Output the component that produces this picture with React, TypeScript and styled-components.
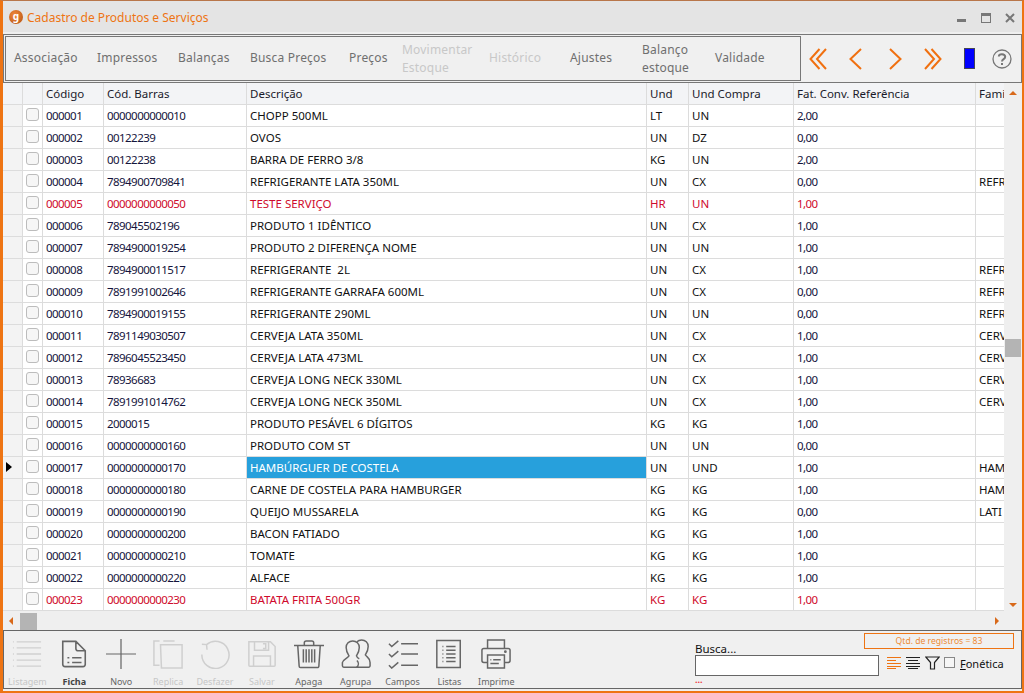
import React from "react";
import styled, { createGlobalStyle } from "styled-components";

const Global = createGlobalStyle`
  html, body { margin: 0; padding: 0; background: #fff; }
  #root { width: 1024px; height: 693px; overflow: hidden; }
  * { box-sizing: border-box; }
`;

const FONT = `"Noto Sans", "Open Sans", sans-serif`;
const ORANGE = "#ee7413";
const COLS = "20px 20px 61px 143px 400px 42px 105px 182px 28px";

const Window = styled.div`
  width: 1024px; height: 693px;
  display: flex; flex-direction: column;
  background: #efefef;
  border-top: 1px solid #b8764a;
  border-left: 3px solid ${ORANGE};
  border-right: 2px solid ${ORANGE};
  border-bottom: 2px solid ${ORANGE};
  font-family: ${FONT};
  font-size: 12px;
  color: #111;
`;
const TitleBar = styled.div`
  height: 31px; flex: none;
  background: #e4e4e4;
  display: flex; align-items: center;
  padding: 0 7px 0 6px;
`;
const Logo = styled.div`
  width: 14px; height: 14px; border-radius: 50%;
  background: radial-gradient(circle at 40% 35%, #f08a3c, #b4500f);
  color: #fff; font: bold 10px/13px ${FONT};
  text-align: center;
`;
const TitleText = styled.div`
  margin: 2px 0 0 4px; color: ${ORANGE}; font-size: 12px; flex: 1;
`;
const WinControls = styled.div`
  display: flex; align-items: center; gap: 14px; margin-top: 2px;
`;
const TopPanel = styled.div`
  height: 49px; flex: none; margin: 2px 0 0 0;
  border: 1px solid #777; background: #f0f0f0;
  display: flex; align-items: center; padding-left: 1px;
`;
const TabGroup = styled.div`
  width: 796px; height: 45px;
  border: 1px solid #777;
  display: flex; align-items: center;
  padding-left: 8px;
`;
const Tab = styled.div<{ $w: number; $off?: boolean; $lift?: boolean }>`
  width: ${(p) => p.$w}px; flex: none;
  font-size: 12px; line-height: 18px;
  letter-spacing: 0.2px;
  margin-bottom: ${(p) => (p.$lift ? "2px" : "0")};
  color: ${(p) => (p.$off ? "#c8c8c8" : "#6f6f6f")};
`;
const NavBar = styled.div`
  flex: 1; display: flex; align-items: center; height: 100%;
`;
const NavIcon = styled.svg<{ $ml: number }>`
  margin-left: ${(p) => p.$ml}px; flex: none; display: block;
`;
const BlueFlag = styled.div`
  width: 11px; height: 21px; flex: none; margin-left: 22px;
  background: #0000ff; border: 1px solid #445;
`;
const Main = styled.div`
  flex: 1; min-height: 0; display: flex; flex-direction: column; background: #efefef;
`;
const GridArea = styled.div`
  height: 528px; display: flex; flex: none;
`;
const Table = styled.div`
  width: 1001px; flex: none; overflow: hidden; background: #fff;
`;
const HeadRow = styled.div`
  display: grid; grid-template-columns: ${COLS};
  height: 22px; background: #f3f4f6;
  border-bottom: 1px solid #dcdcdc;
`;
const HeadCell = styled.div`
  padding-left: 3px; line-height: 21px; white-space: nowrap; overflow: hidden;
  border-right: 1px solid #dcdcdc; color: #1a1a2a; font-size: 11.5px;
  &:last-child { border-right: 0; }
`;
const Row = styled.div`
  display: grid; grid-template-columns: ${COLS};
  height: 22px; border-bottom: 1px solid #dcdcdc; background: #fff;
`;
const Cell = styled.div<{ $red?: boolean; $sel?: boolean; $num?: boolean }>`
  padding-left: 3px; line-height: 21px; white-space: pre; overflow: hidden;
  border-right: 1px solid #dcdcdc; font-size: 11.5px;
  letter-spacing: ${(p) => (p.$num ? "-0.55px" : "0")};
  background: ${(p) => (p.$sel ? "#27a0dc" : "transparent")};
  color: ${(p) => (p.$sel ? "#fff" : p.$red ? "#cf0a2c" : p.$num ? "#14143c" : "#111")};
  &:last-child { border-right: 0; }
`;
const Indicator = styled.div`
  background: #f3f3f3; border-right: 1px solid #dcdcdc;
  display: flex; align-items: center; padding: 0 0 2px 3px;
`;
const Arrow = styled.div`
  width: 0; height: 0;
  border-top: 5px solid transparent; border-bottom: 5px solid transparent;
  border-left: 6px solid #000;
`;
const CheckCell = styled.div`
  border-right: 1px solid #dcdcdc;
  display: flex; align-items: flex-start; padding: 3px 0 0 3px;
`;
const Check = styled.div`
  width: 13px; height: 13px; border: 1px solid #bcbcbc; border-radius: 3px;
  background: #f6f6f6;
`;
const VScroll = styled.div`
  flex: 1; background: #efefef; display: flex; flex-direction: column;
  align-items: center; padding: 8px 0 4px 0; position: relative;
`;
const Thumb = styled.div`
  position: absolute; left: 1px; top: 256px; width: 16px; height: 18px; background: #b4b4b4;
`;
const Tri = styled.div<{ $dir: "up" | "down" | "left" | "right" }>`
  width: 0; height: 0; flex: none;
  ${(p) =>
    p.$dir === "up"
      ? `border-left:4px solid transparent;border-right:4px solid transparent;border-bottom:4px solid #d8691a;`
      : p.$dir === "down"
      ? `border-left:4px solid transparent;border-right:4px solid transparent;border-top:4px solid #d8691a;`
      : p.$dir === "left"
      ? `border-top:4px solid transparent;border-bottom:4px solid transparent;border-right:4px solid #d8691a;`
      : `border-top:4px solid transparent;border-bottom:4px solid transparent;border-left:4px solid #d8691a;`}
`;
const Spacer = styled.div`flex: 1;`;
const HScroll = styled.div`
  height: 19px; flex: none; display: flex; align-items: center;
  padding: 0 23px 0 6px; position: relative;
`;
const HThumb = styled.div`
  position: absolute; left: 17px; top: 2px; width: 17px; height: 17px; background: #b4b4b4;
`;
const BottomPanel = styled.div`
  height: 59px; flex: none; border: 1px solid #666; background: #f0f0f0;
  display: flex; margin-bottom: 1px;
`;
const Tools = styled.div`
  display: flex; width: 680px; flex: none;
`;
const Tool = styled.div<{ $off?: boolean; $bold?: boolean }>`
  width: 46.9px; flex: none; display: flex; flex-direction: column; align-items: center;
  padding-top: 8px;
  color: ${(p) => (p.$off ? "#c6c6c6" : p.$bold ? "#444" : "#666")};
  font-size: 9px; font-weight: ${(p) => (p.$bold ? 700 : 400)};
  line-height: 12px;
  span { margin-top: 7px; white-space: nowrap; }
  svg { display: block; }
`;
const SearchArea = styled.div`
  margin-left: 11px; width: 319px;
  display: grid; grid-template-columns: 169px 15px 135px; grid-template-rows: 18px 1fr;
  padding-top: 2px;
`;
const SearchCol = styled.div`
  grid-column: 1 / 3; grid-row: 1 / 3; padding-top: 9px;
  display: flex; flex-direction: column;
`;
const SearchLabel = styled.div`font-size: 11.5px; line-height: 13px; color: #111;`;
const SearchInput = styled.div`
  width: 184px; height: 21px; background: #fff; border: 1px solid #666;
`;
const Dots = styled.div`
  color: #ef3340; font-size: 9px; line-height: 8px; font-weight: 700;
`;
const Qtd = styled.div`
  grid-column: 2 / 4; grid-row: 1; height: 16px; align-self: start;
  border: 1px solid ${ORANGE}; color: #ee8a33;
  font-size: 8.6px; line-height: 14px; text-align: center; z-index: 1;
`;
const Options = styled.div`
  grid-column: 3; grid-row: 2; display: flex; align-items: flex-start;
  padding: 5px 0 0 8px;
`;
const OptIcon = styled.svg<{ $ml?: number }>`
  display: block; flex: none; margin-left: ${(p) => p.$ml ?? 0}px;
`;
const OptCheck = styled.div`
  width: 11px; height: 11px; margin: 1px 0 0 4px; flex: none; background: #f6f6f6; border: 1px solid #888;
`;
const OptLabel = styled.div`
  margin-left: 5px; font-size: 11px; line-height: 15px; color: #111; white-space: nowrap;
  u { text-decoration: underline; }
`;

type R = [string, string, string, string, string, string, string, (0 | 1)?];
const rows: R[] = [
  ["000001", "0000000000010", "CHOPP 500ML", "LT", "UN", "2,00", ""],
  ["000002", "00122239", "OVOS", "UN", "DZ", "0,00", ""],
  ["000003", "00122238", "BARRA DE FERRO 3/8", "KG", "UN", "2,00", ""],
  ["000004", "7894900709841", "REFRIGERANTE LATA 350ML", "UN", "CX", "0,00", "REFR"],
  ["000005", "0000000000050", "TESTE SERVIÇO", "HR", "UN", "1,00", "", 1],
  ["000006", "789045502196", "PRODUTO 1 IDÊNTICO", "UN", "CX", "1,00", ""],
  ["000007", "7894900019254", "PRODUTO 2 DIFERENÇA NOME", "UN", "UN", "1,00", ""],
  ["000008", "7894900011517", "REFRIGERANTE  2L", "UN", "CX", "1,00", "REFR"],
  ["000009", "7891991002646", "REFRIGERANTE GARRAFA 600ML", "UN", "CX", "0,00", "REFR"],
  ["000010", "7894900019155", "REFRIGERANTE 290ML", "UN", "UN", "0,00", "REFR"],
  ["000011", "7891149030507", "CERVEJA LATA 350ML", "UN", "CX", "1,00", "CERV"],
  ["000012", "7896045523450", "CERVEJA LATA 473ML", "UN", "CX", "1,00", "CERV"],
  ["000013", "78936683", "CERVEJA LONG NECK 330ML", "UN", "CX", "1,00", "CERV"],
  ["000014", "7891991014762", "CERVEJA LONG NECK 350ML", "UN", "CX", "1,00", "CERV"],
  ["000015", "2000015", "PRODUTO PESÁVEL 6 DÍGITOS", "KG", "KG", "1,00", ""],
  ["000016", "0000000000160", "PRODUTO COM ST", "UN", "UN", "0,00", ""],
  ["000017", "0000000000170", "HAMBÚRGUER DE COSTELA", "UN", "UND", "1,00", "HAM"],
  ["000018", "0000000000180", "CARNE DE COSTELA PARA HAMBURGER", "KG", "KG", "1,00", "HAM"],
  ["000019", "0000000000190", "QUEIJO MUSSARELA", "KG", "KG", "0,00", "LATI"],
  ["000020", "0000000000200", "BACON FATIADO", "KG", "KG", "1,00", ""],
  ["000021", "0000000000210", "TOMATE", "KG", "KG", "1,00", ""],
  ["000022", "0000000000220", "ALFACE", "KG", "KG", "1,00", ""],
  ["000023", "0000000000230", "BATATA FRITA 500GR", "KG", "KG", "1,00", "", 1],
];

const tabs: { t: React.ReactNode; w: number; off?: boolean; two?: boolean }[] = [
  { t: "Associação", w: 83 },
  { t: "Impressos", w: 81 },
  { t: "Balanças", w: 72 },
  { t: "Busca Preços", w: 99 },
  { t: "Preços", w: 53 },
  { t: <>Movimentar<br />Estoque</>, w: 87, off: true, two: true },
  { t: "Histórico", w: 81, off: true },
  { t: "Ajustes", w: 72 },
  { t: <>Balanço<br />estoque</>, w: 73, two: true },
  { t: "Validade", w: 60 },
];

const ToolIcon: React.FC<{ c: string; children: React.ReactNode }> = ({ c, children }) => (
  <svg width="30" height="30" viewBox="0 0 32 32" fill="none" stroke={c} strokeWidth="1.4">
    {children}
  </svg>
);

const LIGHT = "#cfcfcf";
const DARK = "#666";

const tools: { l: string; off?: boolean; bold?: boolean; i: React.ReactNode }[] = [
  { l: "Listagem", off: true, i: <ToolIcon c={LIGHT}><path d="M5 3h26M5 9.500h26M5 16h26M5 22.500h26M5 29h26M1 3h1M1 9.500h1M1 16h1M1 22.500h1M1 29h1" /></ToolIcon> },
  { l: "Ficha", bold: true, i: <ToolIcon c={DARK}><path strokeWidth="1.700" d="M4 2.500h14l10 10V27a2.500 2.500 0 0 1-2.500 2.500h-19A2.500 2.500 0 0 1 4 27zM18 2.500V10a2.500 2.500 0 0 0 2.500 2.500H28M9 20h2M14 20h10M9 25h2M14 25h10" /></ToolIcon> },
  { l: "Novo", i: <ToolIcon c={DARK}><path d="M16 0v32M0 16h32" strokeWidth="1.300" /></ToolIcon> },
  { l: "Replica", off: true, i: <ToolIcon c={LIGHT}><path strokeWidth="1.600" d="M11 2h12M7 2H1v26h6M8 6h23v25H9z" /></ToolIcon> },
  { l: "Desfazer", off: true, i: <ToolIcon c={LIGHT}><path strokeWidth="1.600" d="M7 6A14.500 14.500 0 1 1 2 16.500M2 5.500l5 .5.500 5.500" /></ToolIcon> },
  { l: "Salvar", off: true, i: <ToolIcon c={LIGHT}><path strokeWidth="1.600" d="M2 3h23l5 5v20a1 1 0 0 1-1 1H3a1 1 0 0 1-1-1zM8 3v9h15V3M17 5h3v5h-3M7 29V18h18v11" /></ToolIcon> },
  { l: "Apaga", i: <ToolIcon c={DARK}><path strokeWidth="1.600" d="M0 7h32M11 7V4a2 2 0 0 1 2-2h6a2 2 0 0 1 2 2v3M4 7l1.500 22a1.500 1.500 0 0 0 1.500 1.500h18a1.500 1.500 0 0 0 1.500-1.500L28 7M10 11v14M13 11v14M16 11v14M19 11v14M22 11v14" /></ToolIcon> },
  { l: "Agrupa", i: <ToolIcon c={DARK}><path strokeWidth="1.600" d="M17 30H3a1.500 1.500 0 0 1-1.500-1.500V25c0-3 5-4 7-7-2-3-3-5-3-9 0-4 3-7 7-7s7 3 7 7c0 4-1 6-3 9 .5 1.500 1.500 2.500 3 3" /><path strokeWidth="1.600" d="M17 3c1-1 3-2 5-2 4 0 7 3 7 7 0 4-1 6-3 9 2 3 5 3 5 8v3.500a1.500 1.500 0 0 1-1.500 1.500H17c2-2 2-5 0-7" /></ToolIcon> },
  { l: "Campos", i: <ToolIcon c={DARK}><path strokeWidth="1.600" d="M1 5l3 3 7-6M14 5h18M1 16l3 3 7-6M14 16h18M1 28l3 3 7-6M14 28h18" /></ToolIcon> },
  { l: "Listas", i: <ToolIcon c={DARK}><path strokeWidth="1.600" d="M3 1.500h25v29H3zM9 8h1M9 12h1M9 16h1M9 20h1M9 24h1M13 8h10M13 12h10M13 16h10M13 20h10M13 24h10" /></ToolIcon> },
  { l: "Imprime", i: <ToolIcon c={DARK}><path strokeWidth="1.600" d="M7 10V1h18v9M7 25H3a2 2 0 0 1-2-2V12a2 2 0 0 1 2-2h26a2 2 0 0 1 2 2v11a2 2 0 0 1-2 2h-4M7 17h18v14H7zM10 22h1M13 22h8M10 26h9" /><circle cx="26" cy="13.500" r=".8" /></ToolIcon> },
];

export default function App() {
  return (
    <Window>
      <Global />
      <TitleBar>
        <Logo>g</Logo>
        <TitleText>Cadastro de Produtos e Serviços</TitleText>
        <WinControls>
          <svg width="10" height="10" viewBox="0 0 10 10"><rect x="0" y="6" width="9" height="3" fill="#777" /></svg>
          <svg width="10" height="10" viewBox="0 0 10 10" fill="none" stroke="#777"><rect x=".5" y=".5" width="9" height="9" /><rect x=".5" y=".5" width="9" height="2" fill="#777" /></svg>
          <svg width="10" height="10" viewBox="0 0 10 10" fill="none" stroke="#777" strokeWidth="2"><path d="M1 1l8 8M9 1l-8 8" /></svg>
        </WinControls>
      </TitleBar>
      <TopPanel>
        <TabGroup>
          {tabs.map((t, i) => (
            <Tab key={i} $w={t.w} $off={t.off} $lift={!t.two}>{t.t}</Tab>
          ))}
        </TabGroup>
        <NavBar>
          <NavIcon $ml={8} width="18" height="22" viewBox="0 0 18 22" fill="none" stroke="#f07010" strokeWidth="2"><path d="M10.500 1L1.500 11l9 10M17 1L8 11l9 10" /></NavIcon>
          <NavIcon $ml={22} width="13" height="22" viewBox="0 0 13 22" fill="none" stroke="#f07010" strokeWidth="2"><path d="M12 1L1.500 11 12 21" /></NavIcon>
          <NavIcon $ml={27} width="13" height="22" viewBox="0 0 13 22" fill="none" stroke="#f07010" strokeWidth="2"><path d="M1 1l10.500 10L1 21" /></NavIcon>
          <NavIcon $ml={22} width="18" height="22" viewBox="0 0 18 22" fill="none" stroke="#f07010" strokeWidth="2"><path d="M7.500 1l9 10-9 10M1 1l9 10-9 10" /></NavIcon>
          <BlueFlag />
          <NavIcon $ml={17} width="20" height="20" viewBox="0 0 20 20" fill="none" stroke="#777" strokeWidth="1.300"><circle cx="10" cy="10" r="9" /><path strokeWidth="2" d="M6.800 7.500C7 4.500 13 4.500 13.200 7.800c0 2.400-3.200 2.200-3.200 4.700M10 14v2" /></NavIcon>
        </NavBar>
      </TopPanel>
      <Main>
        <GridArea>
          <Table>
            <HeadRow>
              <HeadCell /><HeadCell />
              <HeadCell>Código</HeadCell>
              <HeadCell>Cód. Barras</HeadCell>
              <HeadCell>Descrição</HeadCell>
              <HeadCell>Und</HeadCell>
              <HeadCell>Und Compra</HeadCell>
              <HeadCell>Fat. Conv. Referência</HeadCell>
              <HeadCell>Fami</HeadCell>
            </HeadRow>
            {rows.map((r) => {
              const red = r[7] === 1;
              const sel = r[0] === "000017";
              return (
                <Row key={r[0]}>
                  <Indicator>{sel && <Arrow />}</Indicator>
                  <CheckCell><Check /></CheckCell>
                  <Cell $red={red} $num>{r[0]}</Cell>
                  <Cell $red={red} $num>{r[1]}</Cell>
                  <Cell $red={red} $sel={sel}>{r[2]}</Cell>
                  <Cell $red={red}>{r[3]}</Cell>
                  <Cell $red={red}>{r[4]}</Cell>
                  <Cell $red={red} $num>{r[5]}</Cell>
                  <Cell $red={red}>{r[6]}</Cell>
                </Row>
              );
            })}
          </Table>
          <VScroll>
            <Tri $dir="up" />
            <Spacer />
            <Thumb />
            <Tri $dir="down" />
          </VScroll>
        </GridArea>
        <HScroll>
          <Tri $dir="left" />
          <HThumb />
          <Spacer />
          <Tri $dir="right" />
        </HScroll>
        <BottomPanel>
          <Tools>
            {tools.map((t) => (
              <Tool key={t.l} $off={t.off} $bold={t.bold}>
                {t.i}
                <span>{t.l}</span>
              </Tool>
            ))}
          </Tools>
          <SearchArea>
            <SearchCol>
              <SearchLabel>Busca...</SearchLabel>
              <SearchInput />
              <Dots>...</Dots>
            </SearchCol>
            <Qtd>Qtd. de registros = 83</Qtd>
            <Options>
              <OptIcon width="14" height="13" viewBox="0 0 14 13" stroke={ORANGE} strokeWidth="1"><path d="M0 1.500h14M0 4.500h9M0 7.500h14M0 10.500h14M0 12.500h9" /></OptIcon>
              <OptIcon $ml={5} width="14" height="13" viewBox="0 0 14 13" stroke="#222" strokeWidth="1"><path d="M0 1.500h14M2 4.500h10M0 7.500h14M0 10.500h14M2 12.500h10" /></OptIcon>
              <OptIcon $ml={5} width="15" height="14" viewBox="0 0 15 14" fill="none" stroke="#222" strokeWidth="1.200"><path d="M.8 1h13.400L9.500 6.500V13h-4V6.500z" /></OptIcon>
              <OptCheck />
              <OptLabel><u>F</u>onética</OptLabel>
            </Options>
          </SearchArea>
        </BottomPanel>
      </Main>
    </Window>
  );
}
